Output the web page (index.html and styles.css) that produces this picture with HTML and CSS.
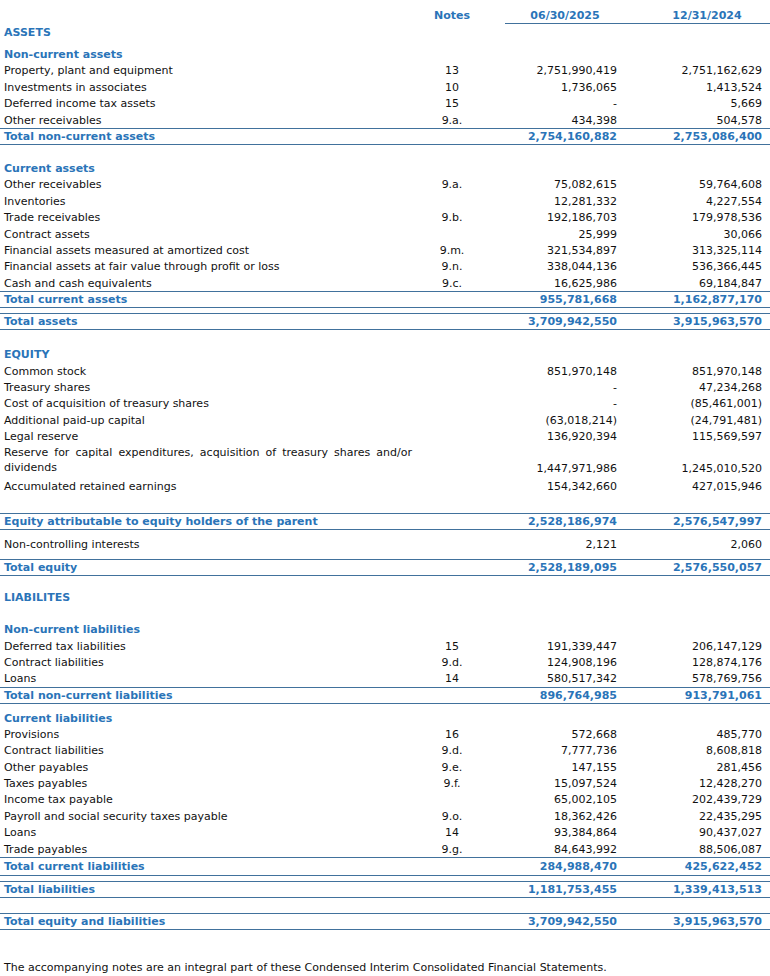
FILE: index.html
```html
<!DOCTYPE html>
<html lang="en">
<head>
<meta charset="utf-8">
<title>Condensed Interim Consolidated Statement of Financial Position</title>
<link rel="stylesheet" href="styles.css">
</head>
<body>
<table class="bs">
  <colgroup>
    <col class="c-label"><col class="c-notes"><col class="c-gap"><col class="c-d1"><col class="c-d2">
  </colgroup>
  <thead>
    <tr class="hdr">
      <th class="lbl"></th>
      <th class="notes">Notes</th>
      <th></th>
      <th class="d1">06/30/2025</th>
      <th class="d2">12/31/2024</th>
    </tr>
  </thead>
  <tbody>
    <tr class="r title"><td class="lbl" colspan="5">ASSETS</td></tr>
    <tr class="sp sp6"><td colspan="5"></td></tr>
    <tr class="r sub"><td class="lbl" colspan="5">Non-current assets</td></tr>
    <tr class="r"><td class="lbl">Property, plant and equipment</td><td class="notes">13</td><td></td><td class="num">2,751,990,419</td><td class="num">2,751,162,629</td></tr>
    <tr class="r"><td class="lbl">Investments in associates</td><td class="notes">10</td><td></td><td class="num">1,736,065</td><td class="num">1,413,524</td></tr>
    <tr class="r"><td class="lbl">Deferred income tax assets</td><td class="notes">15</td><td></td><td class="num">-</td><td class="num">5,669</td></tr>
    <tr class="r"><td class="lbl">Other receivables</td><td class="notes">9.a.</td><td></td><td class="num">434,398</td><td class="num">504,578</td></tr>
    <tr class="tot"><td class="lbl">Total non-current assets</td><td></td><td></td><td class="num">2,754,160,882</td><td class="num">2,753,086,400</td></tr>
    <tr class="sp sp15"><td colspan="5"></td></tr>
    <tr class="r sub"><td class="lbl" colspan="5">Current assets</td></tr>
    <tr class="r"><td class="lbl">Other receivables</td><td class="notes">9.a.</td><td></td><td class="num">75,082,615</td><td class="num">59,764,608</td></tr>
    <tr class="r"><td class="lbl">Inventories</td><td class="notes"></td><td></td><td class="num">12,281,332</td><td class="num">4,227,554</td></tr>
    <tr class="r"><td class="lbl">Trade receivables</td><td class="notes">9.b.</td><td></td><td class="num">192,186,703</td><td class="num">179,978,536</td></tr>
    <tr class="r"><td class="lbl">Contract assets</td><td class="notes"></td><td></td><td class="num">25,999</td><td class="num">30,066</td></tr>
    <tr class="r"><td class="lbl">Financial assets measured at amortized cost</td><td class="notes">9.m.</td><td></td><td class="num">321,534,897</td><td class="num">313,325,114</td></tr>
    <tr class="r"><td class="lbl">Financial assets at fair value through profit or loss</td><td class="notes">9.n.</td><td></td><td class="num">338,044,136</td><td class="num">536,366,445</td></tr>
    <tr class="r"><td class="lbl">Cash and cash equivalents</td><td class="notes">9.c.</td><td></td><td class="num">16,625,986</td><td class="num">69,184,847</td></tr>
    <tr class="tot"><td class="lbl">Total current assets</td><td></td><td></td><td class="num">955,781,668</td><td class="num">1,162,877,170</td></tr>
    <tr class="sp sp5"><td colspan="5"></td></tr>
    <tr class="tot"><td class="lbl">Total assets</td><td></td><td></td><td class="num">3,709,942,550</td><td class="num">3,915,963,570</td></tr>
    <tr class="sp sp16"><td colspan="5"></td></tr>
    <tr class="r title"><td class="lbl" colspan="5">EQUITY</td></tr>
    <tr class="r"><td class="lbl">Common stock</td><td class="notes"></td><td></td><td class="num">851,970,148</td><td class="num">851,970,148</td></tr>
    <tr class="r"><td class="lbl">Treasury shares</td><td class="notes"></td><td></td><td class="num">-</td><td class="num">47,234,268</td></tr>
    <tr class="r"><td class="lbl">Cost of acquisition of treasury shares</td><td class="notes"></td><td></td><td class="num">-</td><td class="num">(85,461,001)</td></tr>
    <tr class="r"><td class="lbl">Additional paid-up capital</td><td class="notes"></td><td></td><td class="num">(63,018,214)</td><td class="num">(24,791,481)</td></tr>
    <tr class="r"><td class="lbl">Legal reserve</td><td class="notes"></td><td></td><td class="num">136,920,394</td><td class="num">115,569,597</td></tr>
    <tr class="r2"><td class="lbl wrap" colspan="3">Reserve for capital expenditures, acquisition of treasury shares and/or dividends</td><td class="num">1,447,971,986</td><td class="num">1,245,010,520</td></tr>
    <tr class="r"><td class="lbl">Accumulated retained earnings</td><td class="notes"></td><td></td><td class="num">154,342,660</td><td class="num">427,015,946</td></tr>
    <tr class="sp sp19"><td colspan="5"></td></tr>
    <tr class="tot"><td class="lbl">Equity attributable to equity holders of the parent</td><td></td><td></td><td class="num">2,528,186,974</td><td class="num">2,576,547,997</td></tr>
    <tr class="tall"><td class="lbl">Non-controlling interests</td><td class="notes"></td><td></td><td class="num">2,121</td><td class="num">2,060</td></tr>
    <tr class="tot"><td class="lbl">Total equity</td><td></td><td></td><td class="num">2,528,189,095</td><td class="num">2,576,550,057</td></tr>
    <tr class="sp sp13"><td colspan="5"></td></tr>
    <tr class="r title"><td class="lbl" colspan="5">LIABILITES</td></tr>
    <tr class="sp sp16"><td colspan="5"></td></tr>
    <tr class="r sub"><td class="lbl" colspan="5">Non-current liabilities</td></tr>
    <tr class="r"><td class="lbl">Deferred tax liabilities</td><td class="notes">15</td><td></td><td class="num">191,339,447</td><td class="num">206,147,129</td></tr>
    <tr class="r"><td class="lbl">Contract liabilities</td><td class="notes">9.d.</td><td></td><td class="num">124,908,196</td><td class="num">128,874,176</td></tr>
    <tr class="r"><td class="lbl">Loans</td><td class="notes">14</td><td></td><td class="num">580,517,342</td><td class="num">578,769,756</td></tr>
    <tr class="tot"><td class="lbl">Total non-current liabilities</td><td></td><td></td><td class="num">896,764,985</td><td class="num">913,791,061</td></tr>
    <tr class="r sub lead"><td class="lbl" colspan="5">Current liabilities</td></tr>
    <tr class="r"><td class="lbl">Provisions</td><td class="notes">16</td><td></td><td class="num">572,668</td><td class="num">485,770</td></tr>
    <tr class="r"><td class="lbl">Contract liabilities</td><td class="notes">9.d.</td><td></td><td class="num">7,777,736</td><td class="num">8,608,818</td></tr>
    <tr class="r"><td class="lbl">Other payables</td><td class="notes">9.e.</td><td></td><td class="num">147,155</td><td class="num">281,456</td></tr>
    <tr class="r"><td class="lbl">Taxes payables</td><td class="notes">9.f.</td><td></td><td class="num">15,097,524</td><td class="num">12,428,270</td></tr>
    <tr class="r"><td class="lbl">Income tax payable</td><td class="notes"></td><td></td><td class="num">65,002,105</td><td class="num">202,439,729</td></tr>
    <tr class="r"><td class="lbl">Payroll and social security taxes payable</td><td class="notes">9.o.</td><td></td><td class="num">18,362,426</td><td class="num">22,435,295</td></tr>
    <tr class="r"><td class="lbl">Loans</td><td class="notes">14</td><td></td><td class="num">93,384,864</td><td class="num">90,437,027</td></tr>
    <tr class="r"><td class="lbl">Trade payables</td><td class="notes">9.g.</td><td></td><td class="num">84,643,992</td><td class="num">88,506,087</td></tr>
    <tr class="tot tot-lg"><td class="lbl">Total current liabilities</td><td></td><td></td><td class="num">284,988,470</td><td class="num">425,622,452</td></tr>
    <tr class="sp sp5"><td colspan="5"></td></tr>
    <tr class="tot"><td class="lbl">Total liabilities</td><td></td><td></td><td class="num">1,181,753,455</td><td class="num">1,339,413,513</td></tr>
    <tr class="sp sp15"><td colspan="5"></td></tr>
    <tr class="tot"><td class="lbl">Total equity and liabilities</td><td></td><td></td><td class="num">3,709,942,550</td><td class="num">3,915,963,570</td></tr>
  </tbody>
</table>
<p class="footnote">The accompanying notes are an integral part of these Condensed Interim Consolidated Financial Statements.</p>
</body>
</html>
```

FILE: styles.css
```css
html, body {
  margin: 0;
  padding: 0;
  background: #ffffff;
}

body {
  font-family: "DejaVu Sans", Verdana, sans-serif;
  font-size: 11px;
  color: #111111;
  padding-top: 7px;
}

.bs {
  width: 770px;
  table-layout: fixed;
  border-collapse: collapse;
  border-spacing: 0;
}

.c-label { width: 417px; }
.c-notes { width: 70px; }
.c-gap { width: 18px; }
.c-d1 { width: 120px; }
.c-d2 { width: 145px; }

.bs th,
.bs td {
  padding: 0;
  vertical-align: middle;
  white-space: nowrap;
  line-height: 13px;
}

.bs .hdr th {
  height: 16px;
  color: #2a74b8;
  font-weight: bold;
  text-align: center;
}

.bs .hdr .d1,
.bs .hdr .d2 {
  border-bottom: 1px solid #41719c;
}

.bs .hdr .d2 {
  padding-left: 19px;
}

.bs .lbl {
  padding-left: 4px;
  text-align: left;
}

.bs .notes {
  text-align: center;
}

.bs .num {
  text-align: right;
  padding-right: 8px;
}

.bs .r td { height: 16.4px; }

.bs .title td,
.bs .sub td {
  color: #2a74b8;
  font-weight: bold;
}

.bs .lead td {
  height: 16px;
  padding-top: 6px;
}

.bs .tot td {
  height: 15px;
  color: #2a74b8;
  font-weight: bold;
  border-top: 1px solid #41719c;
  border-bottom: 1px solid #41719c;
}

.bs .tot-lg td {
  height: 17px;
}

.bs .tall td {
  height: 29px;
}

.bs .r2 td {
  height: 30px;
  vertical-align: bottom;
  padding-bottom: 3px;
}

.bs .r2 .wrap {
  white-space: normal;
  line-height: 15px;
  text-align: justify;
  padding-right: 93px;
}

.bs .sp td { padding: 0; line-height: 0; }
.bs .sp5 td { height: 5px; }
.bs .sp6 td { height: 6px; }
.bs .sp13 td { height: 13px; }
.bs .sp15 td { height: 15px; }
.bs .sp16 td { height: 16px; }
.bs .sp19 td { height: 19px; }

.footnote {
  margin: 31px 0 0 0;
  padding-left: 4px;
  line-height: 13px;
}
```
